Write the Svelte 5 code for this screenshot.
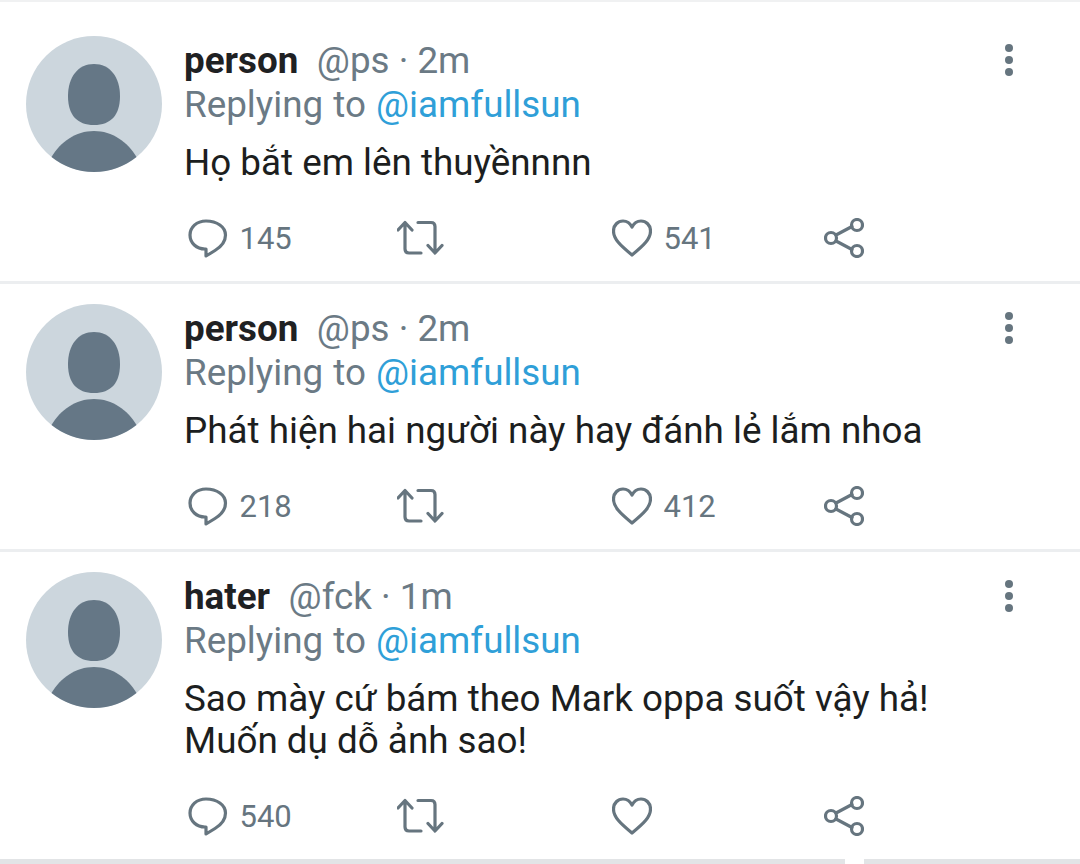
<script>
  const tweets = [
    { name: 'person', handle: '@ps', time: '2m', lines: ['Họ bắt em lên thuyềnnnn'], replies: '145', likes: '541' },
    { name: 'person', handle: '@ps', time: '2m', lines: ['Phát hiện hai người này hay đánh lẻ lắm nhoa'], replies: '218', likes: '412' },
    { name: 'hater', handle: '@fck', time: '1m', lines: ['Sao mày cứ bám theo Mark oppa suốt vậy hả!', 'Muốn dụ dỗ ảnh sao!'], replies: '540', likes: '' }
  ];
</script>

<main class="feed">
  {#each tweets as t}
    <article class="tweet">
      <svg class="avatar" viewBox="0 0 136 136">
        <circle cx="68" cy="68" r="68" fill="#ccd6dd" />
        <path d="M68 28c-16 0-26 13-26 32 0 19 9 29 26 29s26-10 26-29c0-19-10-32-26-32z" fill="#657786" />
        <path d="M25.500 121c9-15 24-26 42.500-26s33.500 11 42.500 26C99 130 84 136 68 136s-31-6-42.500-15z" fill="#657786" />
      </svg>
      <div class="body">
        <div class="head">
          <b class="name">{t.name}</b>
          <span class="meta">{t.handle} · {t.time}</span>
        </div>
        <div class="reply">Replying to <span class="link">@iamfullsun</span></div>
        <div class="text">
          {#each t.lines as l}<p>{l}</p>{/each}
        </div>
        <div class="actions">
          <div class="action">
            <svg class="icon" viewBox="0 0 40 40"><path d="M18 3C8.500 3 2 9.500 2 17c0 8 6.500 14 15 14h1v7l9-5.500c6.500-4 10.500-9.500 10.500-15.500C37.500 9 29 3 18 3z" /></svg>
            <span class="count">{t.replies}</span>
          </div>
          <div class="action">
            <svg class="icon rt" viewBox="0 0 48 40"><path d="M1 12 8 4.500 15 12M8 5v26c0 2.500 1.500 4 4 4h12M45 27.500l-7 7.500-7-7.500M38 34.500V8.500c0-2.500-1.500-4-4-4H21" /></svg>
          </div>
          <div class="action">
            <svg class="icon" viewBox="0 0 40 40"><path d="M20 37C8 27 1.500 21 1.500 13 1.500 7 6 3 11 3c4 0 7 2 9 6 2-4 5-6 9-6 5 0 9.500 4 9.500 10 0 8-6.500 14-18.500 24z" /></svg>
            {#if t.likes}<span class="count">{t.likes}</span>{/if}
          </div>
          <div class="action">
            <svg class="icon" viewBox="0 0 40 40"><path d="M12 17 28 8.500M12 23l16 8.500" /><circle cx="7" cy="20" r="5.500" /><circle cx="33" cy="7" r="5.500" /><circle cx="33" cy="33" r="5.500" /></svg>
          </div>
        </div>
      </div>
      <div class="more"><i></i><i></i><i></i></div>
    </article>
  {/each}
  <span class="notch"></span>
</main>

<style>
  :global(body) { margin: 0; background: #fff; }
  .feed {
    position: relative;
    width: 1080px;
    height: 864px;
    overflow: hidden;
    box-sizing: border-box;
    border-top: 2px solid #f0f1f2;
    padding-top: 14px;
    font-family: Roboto, sans-serif;
  }
  .tweet {
    position: relative;
    box-sizing: border-box;
    display: flex;
    gap: 22px;
    padding: 20px 0 0 26px;
    height: 268px;
    border-bottom: 3px solid #eceef0;
  }
  .tweet:last-of-type { height: 312px; border-bottom: 5px solid #e2e4e6; }
  .avatar { width: 136px; height: 136px; flex: none; }
  .body { flex: 1; min-width: 0; }
  .head { display: flex; gap: 18.500px; height: 46px; padding-top: 2px; box-sizing: border-box; align-items: center; }
  .name { font-size: 36.800px; font-weight: 700; color: #1f2123; }
  .meta { font-size: 36.800px; color: #6b7a85; }
  .reply { font-size: 36.800px; line-height: 46px; word-spacing: 1px; color: #6b7a85; height: 44px; }
  .link { color: #2f9fd8; }
  .text { font-size: 36.800px; line-height: 42px; color: #1c1e20; margin-top: 16px; }
  .text p { margin: 0; }
  .actions {
    display: grid;
    grid-template-columns: 209px 215px 212px 60px;
    margin: 34px 0 0 4px;
  }
  .action { display: flex; align-items: center; gap: 11.500px; height: 40px; }
  .icon { width: 40px; height: 40px; flex: none; fill: none; stroke: #66757f; stroke-width: 3.200; stroke-linejoin: round; stroke-linecap: round; }
  .rt { width: 48px; }
  .count { font-size: 31px; color: #66757f; }
  .more { position: absolute; top: 28px; right: 67px; display: flex; flex-direction: column; gap: 4px; }
  .more i { width: 8px; height: 8px; border-radius: 50%; background: #66757f; }
  .notch { position: absolute; left: 845px; bottom: 0; width: 19px; height: 5px; background: #fff; }
</style>
